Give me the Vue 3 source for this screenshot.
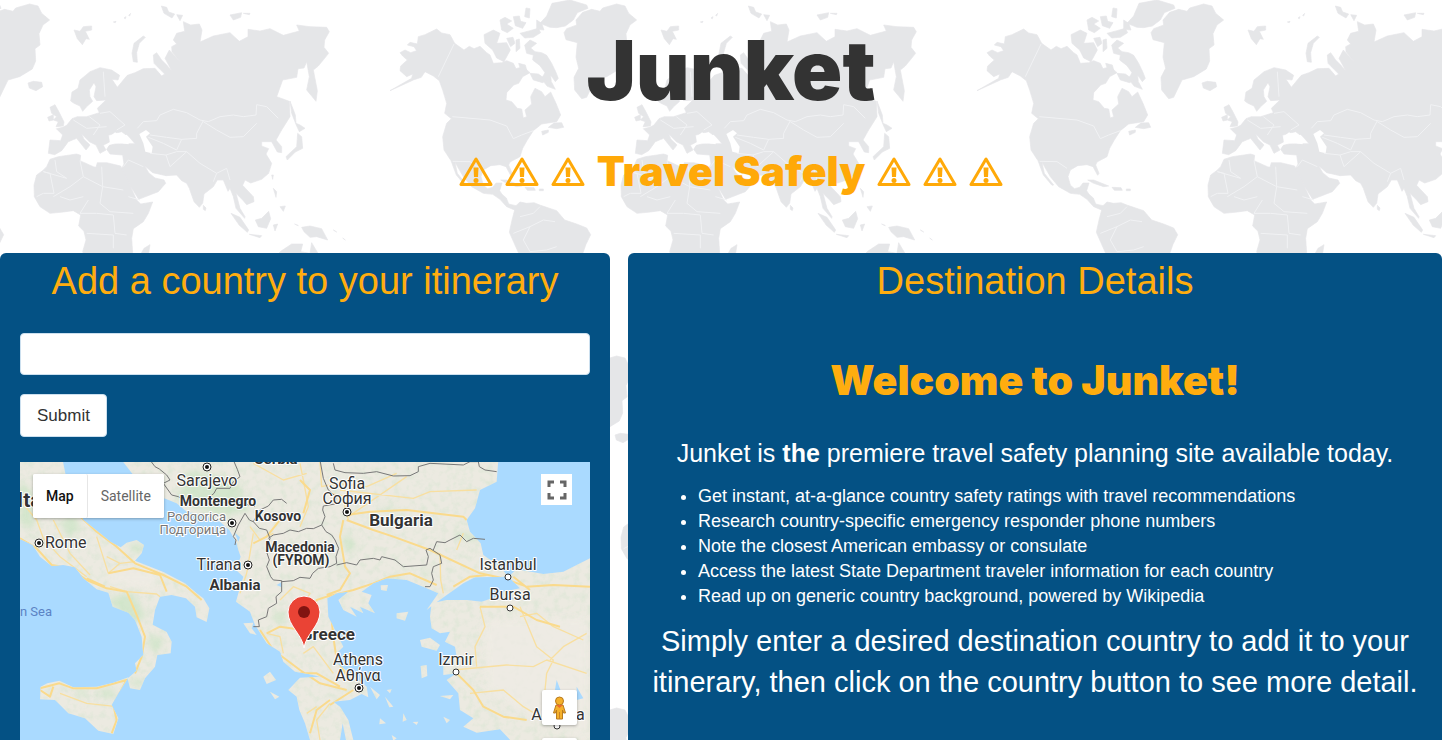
<script setup>
import { ref } from 'vue'

const country = ref('')
const tips = [
  'Get instant, at-a-glance country safety ratings with travel recommendations',
  'Research country-specific emergency responder phone numbers',
  'Note the closest American embassy or consulate',
  'Access the latest State Department traveler information for each country',
  'Read up on generic country background, powered by Wikipedia'
]

const labels = [
  { t: 'Italy', x: -3, y: 45, k: 'big', a: 'start' },
  { t: 'Serbia', x: 256, y: 2, k: 'bold', a: 'mid' },
  { t: 'Sarajevo', x: 187, y: 24, k: 'city', a: 'mid' },
  { t: 'Montenegro', x: 198, y: 44, k: 'nation', a: 'mid' },
  { t: 'Podgorica', x: 206, y: 59, k: 'minor', a: 'end' },
  { t: 'Подгорица', x: 206, y: 72, k: 'minor', a: 'end' },
  { t: 'Kosovo', x: 258, y: 59, k: 'nation', a: 'mid' },
  { t: 'Rome', x: 25, y: 86, k: 'city', a: 'start' },
  { t: 'Tirana', x: 199, y: 108, k: 'city', a: 'mid' },
  { t: 'Albania', x: 215, y: 128, k: 'bold', a: 'mid' },
  { t: 'Macedonia', x: 280, y: 90, k: 'nation', a: 'mid' },
  { t: '(FYROM)', x: 281, y: 103, k: 'nation', a: 'mid' },
  { t: 'Sofia', x: 327, y: 27, k: 'city', a: 'mid' },
  { t: 'София', x: 327, y: 42, k: 'city', a: 'mid' },
  { t: 'Bulgaria', x: 381, y: 64, k: 'country', a: 'mid' },
  { t: 'Istanbul', x: 488, y: 108, k: 'city', a: 'mid' },
  { t: 'Bursa', x: 490, y: 138, k: 'city', a: 'mid' },
  { t: 'Greece', x: 308, y: 178, k: 'country', a: 'mid' },
  { t: 'Athens', x: 338, y: 203, k: 'city', a: 'mid' },
  { t: 'Αθήνα', x: 338, y: 219, k: 'city', a: 'mid' },
  { t: 'Izmir', x: 436, y: 203, k: 'city', a: 'mid' },
  { t: 'Antalya', x: 538, y: 258, k: 'city', a: 'mid' },
  { t: 'Tyrrhenian Sea', x: 32, y: 154, k: 'sea', a: 'end' }
]
const capitals = [[187, 5], [212, 61], [19, 81], [228, 103], [327, 50], [339, 226]]
const towns = [[488, 115], [490, 146], [436, 210], [537, 264]]
</script>

<template>
  <div class="page">
    <svg class="world" aria-hidden="true">
      <defs>
        <pattern id="tile" x="-591" y="0" width="1761" height="1056" patternUnits="userSpaceOnUse" patternTransform="scale(.33333)">
          <g class="ground">
            <path d="M30 212L32 198 52 180 38 168 30 158 45 150 62 158 80 152 72 140 52 135 60 127 82 132 85 110 105 104 140 87 155 99 180 104 194 130 222 150 238 139 252 146 270 139 290 158 300 165 310 190 335 188 350 182 370 190 378 206 400 200 420 218 398 230 386 250 371 255 350 278 348 300 365 305 382 325 395 327 400 354 410 350 405 330 425 312 422 290 435 265 455 275 465 290 482 276 498 310 512 345 500 365 455 372 430 392 412 420 398 445 390 470 360 486 356 495 366 520 362 526 348 500 330 494 302 497 280 510 273 530 280 555 292 566 308 562 318 549 336 549 329 572 336 583 349 594 356 612 378 617 390 606 410 610 432 608 452 616 476 624 500 632 524 660 560 672 590 684 602 704 588 733 579 758 560 795 510 850 470 930 446 990 428 950 432 850 420 800 386 760 358 697 366 660 374 630 350 620 330 598 308 583 280 580 245 560 220 530 195 487 202 520 230 555 225 556 199 525 183 482 162 450 158 410 170 370 184 356 164 340 170 310 158 270 148 242 130 228 105 215 94 232 70 240 0 272 65 235 68 222 50 230Z"/>
            <path d="M522 98L530 86 560 75 558 60 578 37 605 28 630 34 638 24 680 12 705 18 716 40 740 60 720 75 708 101 711 135 696 146 698 183 688 207 650 230 615 240 590 292 575 296 554 270 552 232 566 205 558 172 562 128 528 119Z"/>
            <path d="M450 70L470 48 486 10 540 0 590 15 594 25 562 38 550 60 526 78 500 83 480 82zM282 104L310 90 330 100 320 130 350 128 361 150 342 185 320 174 308 150 285 130zM330 60L345 52 365 63 350 72 370 85 352 98 335 90zM370 50L388 48 392 64 408 68 398 85 376 77zM408 24L420 26 418 54 404 50zM390 100L420 92 445 85 452 98 430 112 404 114zM350 115L369 112 375 130 362 140zM378 120L388 117 390 145 378 155zM404 135L420 120 440 130 422 144 435 155 455 158 470 166 485 190 497 215 505 235 496 245 482 225 484 245 496 268 472 259 454 237 465 218 450 197 428 180 430 165 410 160zM386 190L406 195 410 210 394 216zM420 220L445 222 470 240 458 248 430 240zM440 60L455 70 462 90 440 88zM492 369L515 368 521 382 500 386 475 382z"/>
            <path d="M332 540L350 540 395 558 380 560 350 550zM405 562L432 563 436 571 412 571zM448 567L460 567 460 572 448 572zM455 394L475 390 475 397 458 405z"/>
            <g transform="translate(591 0)">
              <path d="M84 249L100 244 125 247 128 260 108 272 88 264zM222 90L240 94 250 80 275 78 275 90 256 94 268 118 258 116 247 134 232 116zM150 322L165 314 176 334 192 366 190 378 168 380 175 365 160 360 170 350 155 340zM143 352L160 344 160 360 147 363zM400 185L396 160 402 130 430 108 436 112 418 130 410 158 412 187zM484 18L500 22 506 36 524 42 516 54 492 40zM530 44L548 46 540 62zM690 45L725 38 722 52 700 60zM730 40L750 40 748 44zM340 66L348 64 346 68zM372 54L378 50 376 56zM386 46L392 40 389 48z"/>
              <path d="M145 460L150 420 182 422 188 405 169 386 188 382 200 376 216 356 232 350 260 350 276 345 298 338 292 325 318 300 290 302 282 290 288 260 282 248 268 270 270 290 278 304 260 320 248 334 240 318 222 310 212 303 216 276 234 265 240 240 270 215 300 203 335 210 359 226 354 240 336 238 352 262 370 240 382 226 405 218 430 206 465 205 485 228 494 222 462 190 460 165 470 158 485 180 500 195 515 212 495 175 508 150 540 186 516 155 515 140 530 132 520 120 530 100 554 94 550 65 572 75 598 72 606 90 600 126 640 108 690 98 718 124 744 110 744 88 780 93 810 86 850 106 898 93 890 75 930 80 980 82 988 95 974 120 972 142 986 160 955 198 940 210 952 272 948 304 920 270 928 230 920 185 912 204 894 206 890 232 848 240 830 290 868 304 870 350 845 390 828 420 845 440 845 458 832 456 815 425 785 425 785 438 806 446 798 462 815 490 806 520 785 538 752 549 735 540 728 556 760 590 762 605 740 614 728 600 708 580 720 625 735 650 734 655 708 625 700 590 690 565 684 574 670 540 652 540 640 560 612 582 608 610 598 622 582 605 568 565 560 550 545 542 530 525 498 527 458 518 434 497 446 518 465 534 492 540 497 550 475 575 416 598 400 572 360 515 372 492 368 465 330 462 320 448 328 436 345 432 405 431 390 414 365 395 345 400 325 406 330 425 310 436 318 450 300 460 288 435 268 425 245 402 252 418 270 435 258 450 230 415 205 425 185 452 164 464Z"/>
              <path d="M150 478L175 470 230 462 242 466 240 482 280 500 288 502 292 488 320 488 362 498 385 545 410 600 422 612 458 606 445 640 430 665 400 686 395 715 398 760 382 820 340 890 300 900 282 860 248 755 258 720 252 694 236 678 242 645 220 632 190 636 150 640 120 620 103 590 102 555 110 525 128 512 140 500ZM432 745L450 734 445 765 430 800 418 770zM870 303L886 345 888 370 900 375 915 385 898 395 890 378 875 340zM893 400L905 410 908 445 886 456 862 480 858 470 890 440zM610 616L618 624 616 632 610 628zM693 640L720 652 746 690 742 697 718 676zM748 703L785 707 780 713zM766 660L785 655 806 634 812 656 800 685 775 680zM820 675L833 672 825 693zM815 525L820 525 818 538zM820 565L830 575 828 592zM840 620L856 618 850 634zM884 672L895 677zM905 682L930 678 965 686 983 720 950 710 930 712 912 695zM842 754L875 732 908 732 902 755 930 760 935 728 955 762 990 840 960 900 820 860 800 800zM1000 690L1010 696zM1028 714L1036 720z"/>
            </g>
          </g>
          <g class="lake"><path transform="translate(591 0)" d="M418 402L438 390 450 400 438 410 458 440 455 460 436 455 430 430zM328 412L345 397 365 408 380 404 392 418 385 433 350 427 330 433z"/></g>
          <g class="frontier">
            <path d="M192 132L145 230M187 350L300 360 350 378 370 416 395 405 430 392M188 484L240 485 270 505M390 650L430 640 450 620M420 680L400 720 420 755 470 750 500 740M370 700L420 680 460 660 495 665"/>
            <g transform="translate(591 0)">
              <path d="M412 385L430 365 470 362 480 345 520 328 560 338 600 360 625 365 660 350 700 345 730 350 768 345 770 314 800 320 835 355M610 365L650 390 690 412 730 410 770 370M610 362L590 400 590 415 545 418 500 412 450 405M445 412L490 430 530 450 545 418M498 465L510 500 560 455 600 490 650 520 680 505 690 540M560 455L530 455 498 465 450 460M650 520L640 545M165 480L170 515 200 535 130 515 150 520 162 580 130 580 110 590M240 482L250 530 210 560 160 590M305 500L308 560 370 570M250 530L308 560 300 610 330 635 400 640M250 590L210 600 180 590M265 600L240 640 290 640 340 645 345 700 380 705M370 500L385 480 430 500M300 340L330 335 375 375 350 390M220 360L260 385 320 380M268 350L300 375 280 405M310 215L315 290M385 590L420 600M260 700L340 705 340 745"/>
            </g>
          </g>
        </pattern>
      </defs>
      <rect width="100%" height="100%" fill="url(#tile)"/>
    </svg>

    <header class="masthead">
      <h1>Junket</h1>
      <h2 class="tagline">
        <svg v-for="n in 3" :key="'l' + n" class="warn" viewBox="0 0 34 29" aria-hidden="true"><path d="M17 2L2 27.500H32Z"/><path class="mark" d="M14.500 10.500H19.500L19 20H15z"/><circle class="mark" cx="17" cy="23.500" r="2.500"/></svg>
        <span>Travel Safely</span>
        <svg v-for="n in 3" :key="'r' + n" class="warn" viewBox="0 0 34 29" aria-hidden="true"><path d="M17 2L2 27.500H32Z"/><path class="mark" d="M14.500 10.500H19.500L19 20H15z"/><circle class="mark" cx="17" cy="23.500" r="2.500"/></svg>
      </h2>
    </header>

    <main class="columns">
      <section class="panel planner">
        <h2 class="panel-title"><label for="country">Add a country to your itinerary</label></h2>
        <form @submit.prevent>
          <input id="country" v-model="country" type="text">
          <button class="submit" type="submit">Submit</button>
        </form>

        <div class="map">
          <svg class="terrain" role="img" aria-label="Map of southern Europe">
            <defs>
              <clipPath id="coast">
                <path d="M0 0H128L140 60 165 130 190 180 240 220 272 246 302 262 320 248 350 240 372 255 365 280 345 302 390 320 430 336 495 370 530 400 550 415 568 445 560 486 530 472 525 440 498 415 455 405 420 410 405 450 398 494 440 516 455 545 452 580 412 585 405 620 375 655 360 690 330 685 323 655 350 632 345 610 370 585 365 530 345 480 325 458 278 440 265 398 230 388 190 355 165 322 130 315 95 318 60 290 38 255 0 237Z"/>
                <path d="M62 680L82 670 118 662 160 682 230 680 280 668 325 652 295 700 275 735 295 775 280 822 235 812 195 775 145 760 105 720 60 718Z"/>
                <path d="M305 0L340 45 395 82 425 112 470 130 500 155 545 164 600 185 628 210 650 250 655 270 662 290 648 330 670 350 655 400 648 425 690 455 705 495 715 510 740 550 780 575 790 605 825 635 865 642 900 650 840 653 805 690 830 710 838 750 855 790 870 840H960L968 790 980 850 1000 840 985 780 960 740 940 725 990 720 1025 702 1045 712 1040 680 1010 655 950 610 950 580 970 560 950 520 925 470 922 415 950 400 985 395 955 420 970 450 1010 470 990 440 1030 460 1020 440 1065 460 1045 430 1055 405 1025 395 1060 370 1100 355 1160 360 1220 385 1255 400 1220 450 1245 430 1330 370 1365 352 1465 350 1440 320 1390 285 1382 250 1350 215 1340 180 1365 145 1380 90 1430 65 1435 0Z"/>
                <path d="M1280 420L1235 430 1230 470 1235 505 1260 520 1290 515 1275 545 1305 560 1310 590 1270 600 1270 645 1310 640 1280 660 1315 700 1320 750 1360 775 1330 800 1370 818 1440 808 1480 850H1740V290L1710 295 1680 310 1630 335 1570 342 1490 328 1465 350 1485 370 1500 385 1450 395 1425 412 1385 425 1340 420Z"/>
                <path d="M670 490L700 488 695 505 710 525 690 520zM730 650L750 635 768 660 740 672zM750 695L778 710 765 718zM1200 540L1230 533 1260 555 1250 572 1205 560zM1202 618L1220 615 1222 648 1205 655zM1130 460L1165 455 1155 482 1130 475zM1082 376L1104 375 1100 393 1083 390zM1050 680L1080 705 1070 718zM1100 690L1115 688 1110 700zM1095 710L1120 740 1108 742zM1080 775L1098 790 1078 793zM1150 760L1160 780 1148 785zM1260 708L1300 705 1290 718zM1178 786L1195 785 1190 795zM1270 770L1290 780 1280 790zM1190 350L1215 360 1200 368zM1115 825L1130 835 1120 842z"/>
              </clipPath>
              <filter id="soft"><feGaussianBlur stdDeviation="9"/></filter>
              <filter id="hills" x="0" y="0" width="1" height="1">
                <feTurbulence type="fractalNoise" baseFrequency=".05" numOctaves="4" seed="8"/>
                <feColorMatrix values="0 0 0 0 .68  0 0 0 0 .78  0 0 0 0 .64  1.4 0 0 0 -.6"/>
              </filter>
            </defs>
            <g transform="scale(.33333) translate(0 -6)">
              <g clip-path="url(#coast)">
                <rect class="land" width="2400" height="1300"/>
                <rect width="2400" height="1300" filter="url(#hills)"/>
                <g class="forest" filter="url(#soft)">
                  <path d="M0 60L40 100 40 210 0 190zM120 180L170 170 180 210 140 230zM320 255L370 250 355 285zM270 410L340 400 380 470 340 490 280 440zM385 530L430 530 420 570 390 570zM170 680L200 690 190 720zM225 685L290 690 270 720zM330 655L370 660 350 685zM760 460L800 455 790 490 760 480zM970 220L1000 240 1010 270 970 270zM1320 215L1380 230 1370 245 1300 230zM1230 330L1210 380 1220 320zM940 310L980 320 970 335zM1100 350L1160 355 1120 370zM500 30L650 60 690 150 600 170 470 120zM1070 135L1140 150 1130 160z"/>
                </g>
                <path class="dry" filter="url(#soft)" d="M1390 480L1700 470V840L1520 760 1400 690zM270 330L420 330 400 390 270 375z"/>
                <g class="thin-road">
                  <path d="M0 120L50 180 70 235 120 290 200 350M100 180L150 280 210 345M230 230L265 340M265 340L300 310M270 380L320 395 410 402 420 410M260 290L300 310 345 305M120 700L200 730 290 740M330 475L350 500M700 220L680 340 660 400M690 200L720 240 760 220M700 10L790 60 860 40M840 10L850 60 865 140 840 200M900 5L905 80 950 70 1040 80 1130 40M960 90L1180 115 1230 95 1370 90M930 100L1010 115M985 170L1160 50M985 180L970 120M1260 280L1262 360 1270 400M1310 270L1330 220M1380 440L1395 500 1365 560 1370 620M1500 440L1550 560 1600 600 1580 640M1700 520L1630 560 1590 600M1700 640L1580 600 1540 620 1460 615 1300 630M1500 470L1550 460 1600 500 1690 540M1350 700L1450 690 1510 740 1560 770 1640 760M1580 640L1570 740M780 420L820 380 870 400 840 450M790 580L780 530 740 520M940 640L880 560 850 580M930 730L890 780 900 840M890 740L860 760"/>
                </g>
                <g class="road">
                  <path d="M0 235L50 265 95 315 150 325 200 360 260 385 320 395 350 465 375 530 365 590 345 640M100 60L160 150 230 215 290 260 345 310 430 345 500 380 545 420M200 355L255 380M265 340L340 325 420 345 440 395M60 685L118 670 160 685 230 685 320 660 280 735 290 780 275 820M60 690L90 710 100 680M700 250L740 230 780 180M840 60L870 90 850 160M970 180L960 230 975 320 990 340 960 390 920 405M980 180L1060 210 1120 230 1230 270 1380 340 1450 355 1520 380 1600 375 1710 380M980 165L1050 155 1160 150 1330 170 1340 180M920 410L890 420 870 480 855 550M920 410L1000 390 1060 370 1110 350 1170 340 1250 375M1300 380L1350 350 1400 345M1480 350L1530 390M1380 440L1480 440 1550 480 1620 500M1305 635L1360 690 1390 740 1450 770 1520 780M740 520L780 500 850 510M720 510L760 570 840 630 900 670 980 690M840 640L890 640 960 680M930 430L940 530 950 600 990 660M930 720L890 750 870 820M930 735L1000 690"/>
                </g>
              </g>
              <path class="lake-blue" d="M644 218L660 232 655 245zM770 375L785 366 785 382zM1610 660L1625 700 1605 690zM1670 680L1690 715 1670 720zM1450 410L1490 415 1470 420zM750 565L785 582 760 580z"/>
              <g class="border">
                <path d="M390 0L405 20 418 27 440 45 450 60 430 70 455 105 475 110 500 125 515 130M640 0L652 28 660 50 640 65 630 85 590 85 582 100 570 110 600 125 630 130 660 128 705 140M645 255L648 240 640 230 655 195 675 160 688 180 700 185 718 205 740 210 750 235 738 270 748 300 740 320 752 350 760 360 785 362 785 395 768 410 770 430 745 445 740 470 715 480 718 500 700 500M700 185L720 150 745 138 760 120 785 118 800 130M745 235L760 225 790 220 810 210 835 215 860 205 880 206 905 195 918 215 935 225 945 240 956 265 948 290 950 310 930 320 895 325 878 340 870 355 840 352 820 362 785 365M905 195L915 170 908 150 910 138 945 132 948 110 925 90 910 55 900 0M950 315L980 308 1010 315 1020 300 1060 295 1080 300 1085 290 1125 300 1150 320 1220 315 1225 290 1218 270 1230 265 1260 285 1265 310 1240 320 1235 340 1240 360 1230 380 1215 380M1240 270L1250 245 1275 248 1290 240 1320 225 1340 245 1360 235 1395 238M940 10L945 30 975 38 1030 40 1070 35 1120 48 1170 47 1195 35 1195 20 1230 10 1330 15 1350 5 1375 5 1378 20 1395 30 1430 35"/>
              </g>
            </g>
            <g class="dots">
              <g v-for="c in capitals" :key="c.join()"><circle class="ring" :cx="c[0]" :cy="c[1]" r="4"/><circle class="core" :cx="c[0]" :cy="c[1]" r="2"/></g>
              <circle v-for="c in towns" :key="c.join()" class="town" :cx="c[0]" :cy="c[1]" r="3"/>
            </g>
            <text v-for="l in labels" :key="l.t" :x="l.x" :y="l.y" :class="['label', l.k, l.a]">{{ l.t }}</text>
            <path class="pin" d="M284 186C282 172 268 164 268 150A16 16 0 0 1 300 150C300 164 286 172 284 186Z"/>
            <circle class="pin-hole" cx="284" cy="150" r="6"/>
          </svg>

          <div class="map-type">
            <button class="active" type="button">Map</button>
            <button type="button">Satellite</button>
          </div>
          <button class="fullscreen" type="button" aria-label="Toggle fullscreen view">
            <svg width="20" height="20" viewBox="0 0 20 20"><path d="M2 7V2H7M13 2H18V7M18 13V18H13M7 18H2V13"/></svg>
          </button>
          <div class="map-tools">
            <button type="button" aria-label="Street View">
              <svg width="15" height="24" viewBox="0 0 15 24"><path class="body" d="M4 9H11L13.500 17H11.500L10.500 14V23H4.500V14L3.500 17H1.500Z"/><circle class="head" cx="7.500" cy="5" r="4"/><path class="scarf" d="M4 9H11L7.500 12Z"/><path class="leg" d="M7.500 16V23"/></svg>
            </button>
            <button type="button" aria-label="Zoom in"></button>
          </div>
        </div>
      </section>

      <section class="panel details">
        <h2 class="panel-title">Destination Details</h2>
        <h3 class="welcome">Welcome to Junket!</h3>
        <p class="lead">Junket is <strong>the</strong> premiere travel safety planning site available today.</p>
        <ul>
          <li v-for="tip in tips" :key="tip">{{ tip }}</li>
        </ul>
        <p class="closing">Simply enter a desired destination country to add it to your itinerary, then click on the country button to see more detail.</p>
      </section>
    </main>
  </div>
</template>

<style>
body { margin: 0; background: #fff; }
</style>

<style scoped>
* { box-sizing: border-box; }
.page { position: relative; display: flex; flex-direction: column; height: 100vh; overflow: hidden; font-family: "Liberation Sans", Arial, sans-serif; color: #333; }
.world { position: absolute; inset: 0; width: 100%; height: 100%; }
.ground { fill: #e5e6e8; stroke: #e5e6e8; stroke-width: 2; stroke-linejoin: round; }
.lake { fill: #fff; }
.frontier { fill: none; stroke: #f1f2f4; stroke-width: 3; stroke-linejoin: round; }
h1, h2, h3, p, ul { margin: 0; }
.masthead { position: relative; flex: none; height: 253px; padding: 26px 0 0 20px; text-align: center; }
h1 { font: 900 83px/88px Inter, "Arial Black", sans-serif; }
.tagline { display: flex; justify-content: center; align-items: center; gap: 12px; margin-top: 35px; font: 900 41px/44px Inter, "Arial Black", sans-serif; color: #ffa908; }
.warn { width: 34px; height: 29px; fill: none; stroke: #ffa908; stroke-width: 3; stroke-linejoin: round; }
.warn .mark { fill: #ffa908; stroke: none; }
.columns { position: relative; flex: 1; min-height: 0; display: grid; grid-template-columns: 610fr 814fr; gap: 18px; }
.panel { display: flex; flex-direction: column; min-width: 0; min-height: 0; border-radius: 6px 6px 0 0; padding: 0 20px; background: #045184; }
.panel-title { margin-top: 7px; font-size: 38px; line-height: 42px; font-weight: 400; text-align: center; color: #ffad0f; }
form { display: flex; flex-direction: column; align-items: flex-start; gap: 19px; margin-top: 31px; }
input { width: 100%; height: 42px; padding: 6px 12px; border: 1px solid #cce0ef; border-radius: 4px; background: #fff; font: inherit; font-size: 18px; }
.submit { height: 43px; padding: 0 16px; border: 1px solid #cce0ef; border-radius: 4px; background: #fff; color: #333; font: 17px/24px "Liberation Sans", Arial, sans-serif; }
.map { position: relative; flex: 1; min-height: 0; margin-top: 25px; overflow: hidden; background: #aadaff; font-family: Roboto, sans-serif; }
.terrain { position: absolute; inset: 0; width: 100%; height: 100%; }
.land { fill: #eceae1; }
.forest { fill: #c5e3c0; opacity: .6; }
.dry { fill: #f0ece5; opacity: .7; }
.road, .thin-road { fill: none; stroke: #fada8c; stroke-width: 6; stroke-linejoin: round; }
.thin-road { stroke: #f8dfa0; stroke-width: 4; }
.lake-blue { fill: #aadaff; }
.border { fill: none; stroke: #777; stroke-width: 3; stroke-linejoin: round; }
.ring { fill: #fff; stroke: #222; stroke-width: 1; }
.core { fill: #111; }
.town { fill: #fff; stroke: #333; stroke-width: 1; }
.label { fill: #333; stroke: #fff; stroke-width: 2; paint-order: stroke; stroke-linejoin: round; font-size: 16px; }
.mid { text-anchor: middle; }
.end { text-anchor: end; }
.nation { font-size: 14px; font-weight: 700; }
.bold { font-size: 15px; font-weight: 700; }
.country { font-size: 17px; font-weight: 700; }
.big { font-size: 21px; font-weight: 700; }
.minor { font-size: 13px; fill: #777; }
.sea { font-size: 13px; fill: #5b83c4; stroke: none; }
.pin { fill: #ea4335; stroke: #fff; stroke-width: 1; }
.pin-hole { fill: #811411; }
.map button { border: 0; background: #fff; padding: 0; font-family: Roboto, sans-serif; }
.map-type { position: absolute; left: 13px; top: 12px; display: flex; height: 44px; border-radius: 2px; background: #fff; box-shadow: 0 1px 3px rgba(0, 0, 0, .3); }
.map .map-type button { padding: 0 13px; font-size: 14px; color: #666; border-radius: 2px; }
.map .map-type .active { color: #111; font-weight: 500; border-right: 1px solid #e6e6e6; }
.fullscreen { position: absolute; right: 18px; top: 12px; display: grid; place-items: center; width: 31px; height: 31px; }
.fullscreen path { fill: none; stroke: #666; stroke-width: 3; }
.map-tools { position: absolute; right: 13px; top: 228px; display: flex; flex-direction: column; gap: 13px; }
.map-tools button { display: grid; place-items: center; width: 35px; height: 35px; border-radius: 2px; box-shadow: 0 1px 3px rgba(0, 0, 0, .3); }
.body, .head { fill: #f5b02a; stroke: #b87b20; stroke-width: 1; }
.scarf { fill: #ec6b2d; }
.leg { stroke: #c98424; stroke-width: 1; }
.details { color: #fff; }
.welcome { margin-top: 56px; font: 900 41px/44px Inter, "Arial Black", sans-serif; text-align: center; color: #ffad0f; }
.lead { margin-top: 32px; font-size: 25px; line-height: 38px; text-align: center; }
ul { margin-top: 12px; padding-left: 50px; font-size: 18px; line-height: 25px; }
.closing { margin-top: 12px; font-size: 29px; line-height: 41px; text-align: center; }
</style>
